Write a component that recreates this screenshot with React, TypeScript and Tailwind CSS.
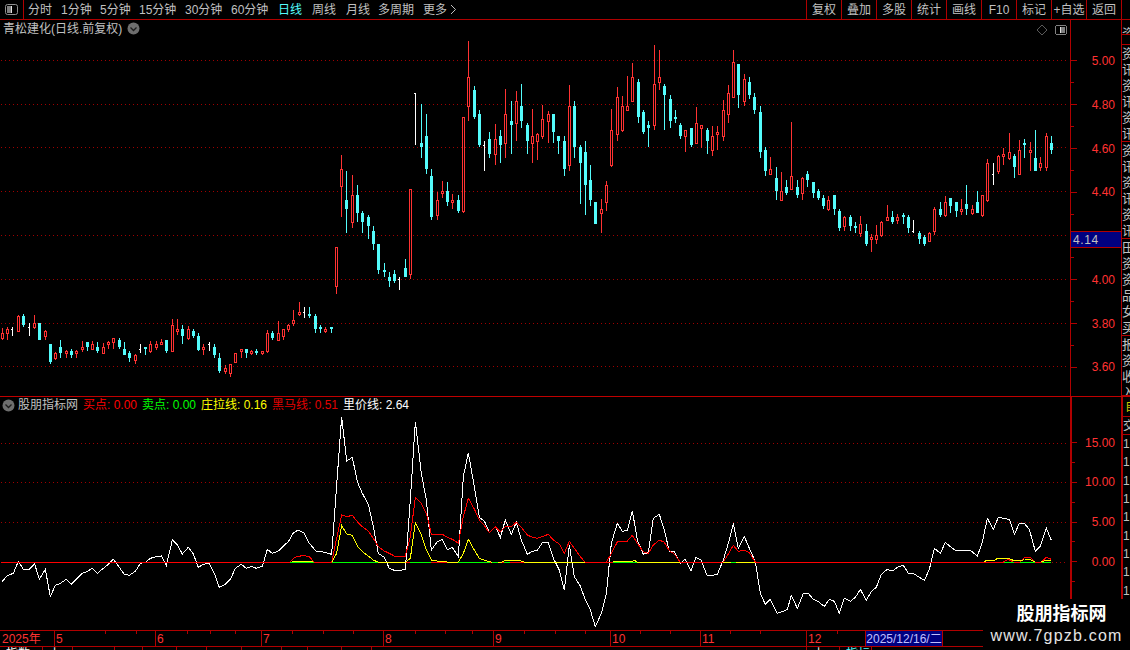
const FONT = "font-['Liberation_Sans','Noto_Sans_CJK_SC',sans-serif]";
const RED = '#ff3232';
const CYAN = '#54fcfc';

type C = { x: number; t: string; v: number[] };
function parse(s: string, ox: number, oy: number): C[] {
  return s.trim().split('\n').map((l) => {
    const p = l.trim().split(/\s+/);
    return {
      x: Math.floor(ox + Number(p[0]) / 3),
      t: p[1],
      v: p.slice(2).map((n) => Math.round(oy + Number(n) / 3)),
    };
  });
}

const candles: C[] = [
  ...parse(`7 r 85 100 118 120
22 r 82 88 102 120
38 w 82 88 107
55 r 45 48 95 96
70 c 42 48 75 80
87 w 70 82 107
103 r 45 70 85 87
118 c 70 70 120 120
136 r 90 94 110 120
151 c 132 132 186 192
166 r 155 160 178 180
181 c 120 141 160 174
199 r 150 153 162 174
214 c 147 153 166 174
229 r 150 153 162 174
247 r 123 141 151 155
262 c 126 126 141 153
277 r 123 132 150 150
292 c 126 141 154 160
310 r 130 141 162 162
325 r 123 126 135 147
340 r 114 115 129 147
358 c 114 120 141 147
373 c 126 147 165 165
388 c 153 159 174 186
406 r 162 165 183 192
421 w 132 148 159
436 c 141 141 147 165
451 r 123 132 157 160
469 r 123 132 145 150
484 r 117 126 135 135
499 c 120 120 153 159
517 r 57 75 156 156
532 r 57 87 96 105
547 c 75 87 108 132
565 r 78 87 117 120
580 c 87 93 108 114
595 c 99 108 150 153
610 r 132 141 150 165
628 w 126 132 153
643 c 132 141 165 174
658 c 159 174 213 219
676 r 195 204 216 222
691 r 192 192 222 231
706 r 160 160 190 190
724 r 147 148 156 174
739 c 147 147 159 174
754 r 150 153 162 165
769 c 147 153 159 165
787 r 153 154 162 165
802 r 90 99 156 159
817 c 93 99 114 120
835 r 63 99 123 123
850 r 87 87 111 120
865 r 72 75 90 96
880 r 30 60 72 78
898 r 6 36 45 48
913 w 21 36 54
928 c 21 42 48 54
946 c 42 48 87 99
961 c 75 81 87 99
976 r 81 87 96 99
994 c 81 81 87 99`, 0, 300),
  ...parse(`49 r 650 650 772 792
64 r 376 418 472 560
79 c 423 510 537 609
97 r 435 496 578 594
112 c 465 495 549 576
127 c 543 549 576 609
145 c 555 561 588 627
160 c 588 603 642 660
175 c 642 642 720 732
193 c 699 720 726 741
208 c 726 741 753 771
223 c 720 732 753 759
238 w 741 747 780
256 c 687 714 741 741
271 r 478 478 734 747
286 w 190 190 345
304 c 222 339 351 384
319 c 252 318 417 432
334 c 417 438 561 570
352 r 486 510 557 570
367 r 453 484 491 504
382 c 456 483 516 528
397 r 492 510 518 537
415 c 495 510 543 549
430 r 262 262 546 549
445 r 33 141 231 273
463 c 168 180 261 267
478 c 240 252 345 351
493 w 333 345 423
508 c 306 327 372 384
526 r 282 327 375 405
541 c 300 318 345 399
556 r 177 252 342 384
574 c 213 273 285 372
589 r 183 213 282 333
604 c 162 228 273 294
622 c 279 285 333 372
637 r 237 318 342 399
652 r 309 312 336 390
667 r 225 267 321 327
685 r 243 252 276 339
700 c 252 252 306 339
715 c 318 318 333 372
733 c 318 333 417 438
748 r 165 228 408 423
763 c 213 228 351 384
781 c 345 351 399 522
796 c 333 366 465 555
811 c 405 450 510 528
826 c 516 516 582 582
844 r 507 537 552 609
859 r 453 465 519 543
874 r 237 300 408 411
892 r 171 201 315 333`, 320, 30),
  ...parse(`67 r 198 228 303 306
82 r 138 228 243 243
97 r 99 141 216 216
115 c 147 156 261 279
130 c 240 246 306 312
145 c 273 285 294 351
163 r 45 162 288 300
178 r 60 141 159 180
193 c 162 168 195 300
211 c 195 207 273 294
226 c 240 261 267 279
241 c 279 285 318 327
256 r 300 300 321 366
274 c 294 294 345 351
289 r 231 279 342 342
304 r 285 285 297 354
322 c 294 300 333 372
337 r 288 318 363 378
352 r 288 306 315 360
370 r 210 240 321 333
385 r 165 189 255 279
400 r 60 96 204 204
415 c 102 102 195 234
433 r 132 147 216 228
448 c 141 156 195 207
463 c 189 201 240 252
481 c 228 246 366 384
496 c 351 360 423 438
511 r 381 417 435 435
529 c 411 444 483 510
544 r 426 483 513 513
559 c 450 471 489 495
574 r 276 438 480 480
592 c 450 471 495 504
607 r 441 444 492 510
622 c 423 432 450 471
640 c 456 456 489 504
655 c 477 483 504 510
670 c 495 504 528 537
685 r 498 510 540 543
703 c 495 495 537 555
718 c 537 543 594 603
733 r 558 561 591 603
751 c 555 561 588 603
766 c 576 588 594 609
781 r 558 582 612 621
799 c 582 603 642 648
814 r 612 621 630 666
829 r 585 615 630 642
844 r 573 576 618 621
862 r 525 561 573 573
877 c 543 561 576 582
892 r 552 561 573 582`, 600, 30),
  ...parse(`70 c 279 285 291 312
85 c 285 291 324 339
100 w 300 333 339
118 c 333 339 357 372
133 c 345 351 372 378
148 r 336 339 366 366
163 r 261 267 336 345
181 c 246 267 285 291
196 r 228 246 288 291
211 c 234 234 258 279
229 c 246 246 273 291
244 r 237 267 276 285
259 c 195 252 267 285
277 r 255 267 282 285
292 c 213 246 279 279
307 r 225 225 288 291
322 r 117 129 243 246
340 w 129 162 195
355 r 105 108 156 162
370 r 84 102 111 135
388 r 39 96 117 120
403 c 102 108 141 174
418 r 60 90 165 165
433 c 57 69 75 114
451 r 66 90 99 153
466 c 30 114 153 153
481 r 111 129 144 153
499 r 39 48 144 153
514 c 48 69 90 102`, 880, 120),
];

function pts(ox: number, oy: number, a: number[]): string {
  const out: string[] = [];
  for (let i = 0; i < a.length; i += 2) {
    out.push(`${ox + a[i] / 3},${oy + a[i + 1] / 3}`);
  }
  return out.join(' ');
}
const Z4 = (a: number[]) => pts(0, 540, a);
const Z11 = (a: number[]) => pts(320, 410, a);
const Z12 = (a: number[]) => pts(680, 480, a);

const white =
  Z4([6,125,22,107,40,100,55,64,70,88,88,88,104,72,118,118,136,88,151,170,166,136,181,130,199,118,214,133,232,115,247,100,262,94,277,85,292,100,310,85,325,73,340,58,358,82,373,103,388,106,406,94,421,70,436,67,451,55,469,50,484,48,499,76,517,0,532,15,547,42,565,22,580,42,595,82,610,73,628,70,643,100,658,142,676,133,691,118,706,85,724,73,739,85,754,79,769,85,787,79,802,28,817,40,835,33,850,18,865,5,880,-21,895,-30,912,-21,927,9,948,33,965,35]) +
  ' ' +
  Z11([0,424,15,427,35,433,50,225,65,20,80,153,97,142,112,215,127,250,145,283,160,350,175,430,193,442,208,475,223,481,241,481,256,478,271,270,286,35,304,190,319,270,334,420,352,395,367,388,382,420,397,412,415,440,430,200,445,128,463,230,478,322,493,333,508,368,526,350,541,382,556,330,574,373,589,337,604,390,622,433,637,424,652,421,667,398,685,398,700,445,718,480,733,540,748,405,763,500,781,528,796,570,811,600,826,650,844,610,859,550,874,400,892,340,907,364,922,361,937,302,952,390,970,433,985,427,1000,325,1018,313,1033,360,1048,424,1063,424,1081,460]) +
  ' ' +
  Z12([15,238,33,272,48,232,63,240,82,288,97,286,112,283,130,240,145,190,160,130,175,205,193,170,208,205,226,245,241,340,256,373,271,358,292,400,307,395,322,388,334,346,352,385,370,340,385,340,400,358,415,365,433,379,448,358,463,364,478,400,493,355,511,364,526,352,541,328,559,361,574,334,589,322,604,283,622,268,637,273,652,262,670,256,685,280,700,280,715,290,733,301,748,268,763,205,781,220,796,187,811,200,826,211,841,211,856,211,871,211,892,228,907,187,922,115,940,148,955,112,970,115,988,118,1003,163,1018,130,1033,130,1048,148,1066,214,1081,199,1099,145,1114,181]);

const redCurves = [
  Z4([868,67,885,52,910,46,928,50,943,67]),
  Z11([35,457,50,385,65,315,80,320,97,316,112,335,127,350,145,363,160,385,175,410,193,423,208,430,223,438,256,438,271,380,286,262,304,280,319,310,334,372,352,375,367,373,382,382,397,388,415,400,430,320,445,265,463,297,478,330,493,347,508,368,526,350,541,365,556,350,574,350,589,337,604,352,622,375,637,382,652,385,667,380,685,373,700,390,718,402,733,430,748,394,763,415,781,440,796,457]),
  Z11([859,457,874,430,892,396,907,393,922,393,937,376,952,400,970,425,985,430,1000,405,1018,390,1033,397,1048,422,1063,432,1081,457]),
  Z12([130,246,145,222,160,196,175,214,193,211,208,218,226,246]),
  Z12([970,246,985,238,1000,246]),
  Z12([1020,246,1035,232,1050,232,1065,246]),
  Z12([1084,246,1099,232,1114,238]),
];

const yellowCurves = [
  Z4([875,64,940,64]),
  Z11([35,457,50,430,65,347,80,372,97,376,112,408,127,425,145,438,160,450,175,457,256,457,271,445,286,338,304,375,319,420,334,450,352,453,375,453,382,457,415,457,430,430,445,388,463,420,478,445,493,450,508,455,520,457,545,457,556,451,570,453,590,451,604,453,615,457,796,457]),
  Z11([880,454,937,454,944,451,952,457,1081,457]),
  Z12([130,246,226,246]),
  Z12([912,246,918,242,945,240,952,235,985,235,1000,241,1020,241,1028,240,1033,237,1050,238,1065,246]),
  Z12([1084,246,1099,240,1114,242]),
];

const greenSegs: [number, number][] = [
  [332, 378], [410, 431], [458, 490], [492, 498], [504, 510], [613, 637], [731, 736], [1004, 1014], [1020, 1035], [1042, 1051], [290, 314],
];

const upperGrid = [60.5, 104.5, 147.5, 191.5, 235.5, 279.5, 323.5, 366.5];
const lowerGrid = [443.5, 482.5, 522.5];

function Candle({ c }: { c: C }) {
  if (c.t === 'w') {
    const [a, tick, b] = c.v;
    return (
      <g fill="#ffffff">
        <rect x={c.x} y={a} width={1} height={b - a} />
        <rect x={c.x - 1} y={tick} width={1} height={1} />
      </g>
    );
  }
  const [wt, bt, bb, wb] = c.v;
  if (c.t === 'c') {
    return (
      <g fill={CYAN}>
        <rect x={c.x} y={wt} width={1} height={wb - wt} />
        <rect x={c.x - 1} y={bt} width={3} height={Math.max(bb - bt, 2)} />
      </g>
    );
  }
  return (
    <g>
      <rect x={c.x} y={wt} width={1} height={wb - wt} fill={RED} />
      <rect x={c.x - 0.5} y={bt + 0.5} width={2} height={Math.max(bb - bt - 1, 2)} fill="#000000" stroke={RED} strokeWidth={1} />
    </g>
  );
}

function Dots({ y, x1 = 1, x2 = 1068 }: { y: number; x1?: number; x2?: number }) {
  return <line x1={x1} x2={x2} y1={y} y2={y} stroke="#a00000" strokeWidth={1} strokeDasharray="1 3" />;
}

function UpperChart() {
  return (
    <svg width={1070} height={376} viewBox="0 20 1070 376" className="block" shapeRendering="crispEdges">
      {upperGrid.map((y) => <Dots key={y} y={y} />)}
      {candles.map((c, i) => <Candle key={i} c={c} />)}
      <path d="M1042 25 L1047 30 L1042 35 L1037 30 Z" fill="none" stroke="#5a5a5a" shapeRendering="auto" />
      <rect x={1055.5} y={25.5} width={11} height={9} rx={2} fill="#000" stroke="#808080" />
      <rect x={1060} y={27} width={1} height={6} fill="#e0e0e0" />
      <rect x={1061} y={27} width={4} height={6} fill="#808080" />
    </svg>
  );
}

function LowerChart() {
  return (
    <svg width={1070} height={233} viewBox="0 397 1070 233" className="block" shapeRendering="crispEdges">
      {lowerGrid.map((y) => <Dots key={y} y={y} />)}
      <Dots y={562.5} x1={1052} />
      <polyline points={white} fill="none" stroke="#ffffff" strokeWidth={1} />
      <line x1={1} x2={1051} y1={562.5} y2={562.5} stroke="#ff0000" />
      {redCurves.map((p, i) => <polyline key={i} points={p} fill="none" stroke="#ff0000" strokeWidth={1} />)}
      {yellowCurves.map((p, i) => <polyline key={i} points={p} fill="none" stroke="#ffff00" strokeWidth={1} />)}
      {greenSegs.map(([a, b]) => <line key={a} x1={a} x2={b} y1={562.5} y2={562.5} stroke="#00ff00" />)}
    </svg>
  );
}

function Chevron() {
  return (
    <svg width={13} height={13} viewBox="0 0 13 13" className="shrink-0">
      <circle cx={6.5} cy={6.5} r={6} fill="#6e6e6e" />
      <path d="M3.5 5.5 L6.5 8.5 L9.5 5.5" fill="none" stroke="#1c1c1c" strokeWidth={1.3} />
    </svg>
  );
}

const periods = [
  { t: '分时', w: 'w-[33px]', c: 'text-[#c0c0c0]' },
  { t: '1分钟', w: 'w-[39px]', c: 'text-[#c0c0c0]' },
  { t: '5分钟', w: 'w-[39px]', c: 'text-[#c0c0c0]' },
  { t: '15分钟', w: 'w-[46px]', c: 'text-[#c0c0c0]' },
  { t: '30分钟', w: 'w-[46px]', c: 'text-[#c0c0c0]' },
  { t: '60分钟', w: 'w-[47px]', c: 'text-[#c0c0c0]' },
  { t: '日线', w: 'w-[34px]', c: 'text-[#54fcfc]' },
  { t: '周线', w: 'w-[34px]', c: 'text-[#c0c0c0]' },
  { t: '月线', w: 'w-[32px]', c: 'text-[#c0c0c0]' },
  { t: '多周期', w: 'w-[45px]', c: 'text-[#c0c0c0]' },
  { t: '更多', w: 'w-[27px]', c: 'text-[#c0c0c0]' },
];
const actions = ['复权', '叠加', '多股', '统计', '画线', 'F10', '标记', '+自选', '返回'];

function Toolbar() {
  return (
    <div className="flex h-[20px] border-b border-[#b00000] text-[12px] leading-none">
      <div className="flex w-[24px] items-center justify-center border-r border-[#b00000]">
        <svg width={13} height={11} viewBox="0 0 13 11">
          <rect x={0.5} y={0.5} width={12} height={10} rx={2} fill="#000" stroke="#909090" />
          <rect x={2} y={2} width={4} height={7} fill="#808080" />
          <rect x={6} y={2} width={1} height={7} fill="#e0e0e0" />
        </svg>
      </div>
      <div className="flex items-center pl-[4px]">
        {periods.map((p) => (
          <span key={p.t} className={`${p.w} ${p.c} whitespace-nowrap`}>{p.t}</span>
        ))}
        <svg width={7} height={11} viewBox="0 0 7 11">
          <path d="M1 1 L5.5 5.5 L1 10" fill="none" stroke="#c0c0c0" strokeWidth={1} />
        </svg>
      </div>
      <div className="ml-auto mr-[8px] flex">
        {actions.map((a) => (
          <div key={a} className="flex h-[19px] w-[35px] items-center justify-center whitespace-nowrap border-l border-[#b00000] text-[#c0c0c0]">
            {a}
          </div>
        ))}
        <div className="w-0 border-l border-[#b00000]" />
      </div>
    </div>
  );
}

const upperLabels = ['5.00', '4.80', '4.60', '4.40', '', '4.00', '3.80', '3.60'];
const lowerLabels = ['15.00', '10.00', '5.00', '0.00'];

function UpperAxis() {
  return (
    <div className="relative h-[376px] w-[51px] shrink-0 border-l border-[#b00000] pt-[30px] text-[12px] leading-none text-[#ff3232]">
      {upperLabels.map((l, i) => (
        <div key={i}>
          <div className="flex h-[21.9px] items-center justify-between pr-[6px]">
            <div className="h-px w-[6px] bg-[#b00000]" />
            <span>{l}</span>
          </div>
          {i < upperLabels.length - 1 && (
            <div className="flex h-[21.9px] items-center">
              <div className="h-px w-[3px] bg-[#b00000]" />
            </div>
          )}
        </div>
      ))}
      <div className="absolute left-0 right-0 top-[211px] flex h-[17px] items-center border-y border-[#b00000] bg-[#000080] pl-[2px] text-[12px] tracking-[0.6px] text-[#c0c0c0]">
        4.14
      </div>
    </div>
  );
}

function LowerAxis() {
  return (
    <div className="h-[233px] w-[51px] shrink-0 border-l-2 border-[#b00000] pt-[36px] text-[12px] leading-none text-[#ff3232]">
      <div className="flex h-[19.8px] items-center justify-between pr-[6px]">
        <div className="h-px w-[5px] bg-[#b00000]" />
        <span>{lowerLabels[0]}</span>
      </div>
      {lowerLabels.slice(1).map((l) => (
        <div key={l}>
          <div className="flex h-[19.8px] items-center">
            <div className="h-px w-[3px] bg-[#b00000]" />
          </div>
          <div className="flex h-[19.8px] items-center justify-between pr-[6px]">
            <div className="h-px w-[5px] bg-[#b00000]" />
            <span>{l}</span>
          </div>
        </div>
      ))}
      <div className="flex h-[19.8px] items-center">
        <div className="h-px w-[3px] bg-[#b00000]" />
      </div>
    </div>
  );
}

const sideGroups = [
  { h: 'h-[10px]', chars: ['资'] },
  { h: 'h-[10px]', chars: [] as string[] },
  { h: 'h-[97px]', chars: ['资', '讯', '资', '讯', '资', '讯'] },
  { h: 'h-[97px]', chars: ['资', '讯', '资', '讯', '资', '讯'] },
  { h: 'h-[97px]', chars: ['田', '资', '资', '品', '女', '买'] },
  { h: 'h-[60px]', chars: ['报', '资', '收', '入'] },
];

function UpperSide() {
  return (
    <div className="h-[376px] w-[9px] shrink-0 overflow-hidden border-l border-[#b00000] pt-[5px] text-[13px] leading-none text-[#c0c0c0]">
      {sideGroups.map((g, i) => (
        <div key={i} className={`${g.h} overflow-hidden border-b border-[#b00000]`}>
          {g.chars.map((c, j) => (
            <div key={j} className="flex h-[16.1px] w-[13px] items-center">{c}</div>
          ))}
        </div>
      ))}
    </div>
  );
}

function LowerSide() {
  return (
    <div className="h-[233px] w-[9px] shrink-0 overflow-hidden border-l-2 border-[#b00000] text-[12px] leading-none text-[#c0c0c0]">
      <div className="flex h-[20px] w-[14px] items-center border-b border-[#b00000] pl-[2px] text-[#c8c800]">自</div>
      <div className="flex h-[18px] w-[14px] items-center border-b border-[#b00000]">交</div>
      {[0, 1, 2, 3, 4, 5, 6, 7, 8, 9].map((i) => (
        <div key={i} className="flex h-[18.3px] items-center">1</div>
      ))}
    </div>
  );
}

const timeCells = [
  { t: '2025年', w: 'w-[54px]' },
  { t: '5', w: 'w-[101px]' },
  { t: '6', w: 'w-[106px]' },
  { t: '7', w: 'w-[122px]' },
  { t: '8', w: 'w-[110px]' },
  { t: '9', w: 'w-[117px]' },
  { t: '10', w: 'w-[90px]' },
  { t: '11', w: 'w-[106px]' },
  { t: '12', w: 'w-[59px]' },
];
const ticks = [105, 136, 187, 210, 235, 292, 323, 353, 415, 445, 472, 524, 555, 585, 640, 670, 730, 760, 837];

const bottomCells = [
  { t: '指数', w: 'w-[43px]', c: 'text-white' },
  { t: '上', w: 'w-[30px]', c: 'text-white' },
  { t: '', w: 'w-[42px]', c: '' },
  { t: '', w: 'w-[28px]', c: '' },
  { t: '', w: 'w-[34px]', c: '' },
  { t: '', w: 'w-[30px]', c: '' },
  { t: '', w: 'w-[35px]', c: '' },
  { t: '', w: 'w-[40px]', c: '' },
  { t: '', w: 'w-[26px]', c: '' },
  { t: '', w: 'w-[34px]', c: '' },
  { t: '', w: 'w-[30px]', c: '' },
  { t: '', w: 'w-[435px]', c: '' },
  { t: '上', w: 'w-[33px]', c: 'text-white' },
  { t: '指标', w: 'w-[32px]', c: 'text-[#54fcfc]' },
];

function TimeAxis() {
  return (
    <div className="relative flex h-[17px] border-y border-[#b00000] text-[12px] leading-none text-[#ff3232]">
      {timeCells.map((c, i) => (
        <div key={c.t} className={`flex ${c.w} shrink-0 items-center ${i === 0 ? 'pl-[2px]' : 'border-l border-[#b00000] pl-[1px]'}`}>
          {c.t}
        </div>
      ))}
      <div className="flex w-[78px] shrink-0 items-center justify-center whitespace-nowrap border-x border-[#b00000] bg-[#000080] text-[#c0c0ff]">
        2025/12/16/二
      </div>
      <svg width={983} height={3} viewBox="0 0 983 3" className="absolute left-0 top-0" shapeRendering="crispEdges">
        {ticks.map((t) => <rect key={t} x={t} y={0} width={1} height={3} fill="#b00000" />)}
      </svg>
    </div>
  );
}

export default function App() {
  return (
    <div className={`relative h-[650px] w-[1130px] overflow-hidden bg-black ${FONT}`}>
      <Toolbar />
      <div className="flex border-b border-[#c00000]">
        <div className="relative h-[376px] w-[1070px] shrink-0">
          <UpperChart />
          <div className="absolute left-[3px] top-[2px] flex items-center gap-[5px] text-[12px] leading-none text-[#c0c0c0]">
            <span className="whitespace-nowrap">青松建化(日线.前复权)</span>
            <Chevron />
          </div>
        </div>
        <UpperAxis />
        <UpperSide />
      </div>
      <div className="flex">
        <div className="relative h-[233px] w-[1070px] shrink-0">
          <LowerChart />
          <div className="absolute left-[2px] top-0 flex h-[16px] items-center text-[12px] leading-none whitespace-nowrap">
            <Chevron />
            <span className="ml-[3px] w-[65px] text-[#c0c0c0]">股朋指标网</span>
            <span className="w-[59px] text-[#ff0000]">买点: 0.00</span>
            <span className="w-[59px] text-[#00ff00]">卖点: 0.00</span>
            <span className="w-[71px] text-[#ffff00]">庄拉线: 0.16</span>
            <span className="w-[71px] text-[#e00000]">黑马线: 0.51</span>
            <span className="text-white">里价线: 2.64</span>
          </div>
        </div>
        <LowerAxis />
        <LowerSide />
      </div>
      <TimeAxis />
      <div className="flex h-[3px] overflow-hidden text-[12px] leading-[14px]">
        {bottomCells.map((c, i) => (
          <div key={i} className={`${c.w} shrink-0 border-r border-[#b00000] pl-[6px] ${c.c}`}>{c.t}</div>
        ))}
      </div>
      <div className="absolute bottom-0 right-0 flex h-[51px] w-[147px] flex-col items-center bg-black pt-[4px]">
        <span className="ml-[10px] text-[18px] font-bold leading-[22px] text-white">股朋指标网</span>
        <span className="mt-[2px] whitespace-nowrap text-[16px] leading-[18px] tracking-[1.2px] text-[#e4e4e4]">www.7gpzb.com</span>
      </div>
    </div>
  );
}
